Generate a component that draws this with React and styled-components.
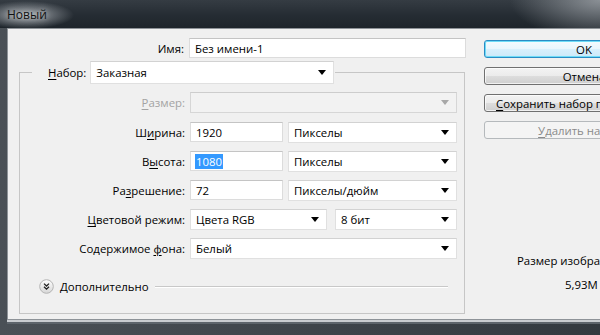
import styled, { createGlobalStyle } from 'styled-components';

const GlobalStyle = createGlobalStyle`
  html, body {
    margin: 0;
    padding: 0;
    background: #1f252b;
  }
  body {
    font-family: "Open Sans", "Liberation Sans", sans-serif;
    font-size: 11.4px;
    color: #000;
  }
`;

function Caret({ disabled }) {
  return (
    <CaretIcon width="8" height="5" viewBox="0 0 8 5">
      <path d="M0 0h8L4 5z" fill={disabled ? '#a8a8a8' : '#000'} />
    </CaretIcon>
  );
}

function Select({ width, disabled, children }) {
  return (
    <SelectBox $width={width} $disabled={disabled}>
      <span>{children}</span>
      <Caret disabled={disabled} />
    </SelectBox>
  );
}

function ExpandIcon() {
  return (
    <svg width="15" height="15" viewBox="0 0 15 15">
      <defs>
        <linearGradient id="exp" x1="0" y1="0" x2="0" y2="1">
          <stop offset="0" stopColor="#ffffff" />
          <stop offset="1" stopColor="#d6d6d6" />
        </linearGradient>
      </defs>
      <circle cx="7.5" cy="7.5" r="6.8" fill="url(#exp)" stroke="#b4b4b4" />
      <path
        d="M5 4.6l2.5 2.4 2.5-2.4M5 7.8l2.5 2.4 2.5-2.4"
        fill="none"
        stroke="#222"
        strokeWidth="1.3"
      />
    </svg>
  );
}

export default function App() {
  return (
    <>
      <GlobalStyle />
      <Window>
        <TitleBar>
          <Title>Новый</Title>
        </TitleBar>
        <Frame>
          <Client>
            <FormPane>
              <NameRow>
                <Label>Имя:</Label>
                <Field $width={277}>Без имени-1</Field>
              </NameRow>
              <Group>
                <Legend>
                  <Label>
                    <u>Н</u>абор:
                  </Label>
                  <Select width={244}>Заказная</Select>
                </Legend>
                <Rows>
                  <Row $extra={1}>
                    <Label $disabled>
                      <u>Р</u>азмер:
                    </Label>
                    <Controls>
                      <Select width={267} disabled />
                    </Controls>
                  </Row>
                  <Row>
                    <Label>
                      Ш<u>и</u>рина:
                    </Label>
                    <Controls>
                      <Field $width={93}>1920</Field>
                      <Select width={169}>Пикселы</Select>
                    </Controls>
                  </Row>
                  <Row>
                    <Label>
                      В<u>ы</u>сота:
                    </Label>
                    <Controls>
                      <Field $width={93}>
                        <Selected>1080</Selected>
                      </Field>
                      <Select width={169}>Пикселы</Select>
                    </Controls>
                  </Row>
                  <Row>
                    <Label>
                      Ра<u>з</u>решение:
                    </Label>
                    <Controls>
                      <Field $width={93}>72</Field>
                      <Select width={169}>Пикселы/дюйм</Select>
                    </Controls>
                  </Row>
                  <Row>
                    <Label>
                      <u>Ц</u>ветовой режим:
                    </Label>
                    <Controls $gap={8}>
                      <Select width={137}>Цвета RGB</Select>
                      <Select width={122}>8 бит</Select>
                    </Controls>
                  </Row>
                  <Row>
                    <Label>
                      Содержимое <u>ф</u>она:
                    </Label>
                    <Controls>
                      <Select width={267}>Белый</Select>
                    </Controls>
                  </Row>
                </Rows>
                <Advanced>
                  <ExpandIcon />
                  <span>Дополнительно</span>
                  <Etched />
                </Advanced>
              </Group>
            </FormPane>
            <SidePane>
              <Button $primary>OK</Button>
              <Button>Отмена</Button>
              <Button>
                <u>С</u>охранить набор параметров...
              </Button>
              <Button $disabled>
                <u>У</u>далить набор...
              </Button>
              <Info>
                <InfoLine $indent={33}>Размер изображения:</InfoLine>
                <InfoLine $indent={81}>5,93M</InfoLine>
              </Info>
            </SidePane>
          </Client>
        </Frame>
      </Window>
    </>
  );
}

const Window = styled.div`
  width: 600px;
  height: 335px;
  overflow: hidden;
  display: flex;
  flex-direction: column;
  background: linear-gradient(180deg, #2f363d 0%, #20262c 100%);
`;

const TitleBar = styled.div`
  height: 28px;
  flex-shrink: 0;
  display: flex;
  align-items: center;
  padding-left: 7px;
  background:
    radial-gradient(ellipse 48px 14px at 26px 15px, rgba(175, 180, 185, 0.95), rgba(175, 180, 185, 0)),
    radial-gradient(ellipse 90px 40px at 600px 0px, rgba(160, 165, 170, 0.8), rgba(160, 165, 170, 0)),
    linear-gradient(180deg, #353c43 0%, #252c33 55%, #1e252b 100%);
`;

const Title = styled.div`
  font-size: 12px;
  color: #111;
  text-shadow: 0 0 6px rgba(220, 222, 225, 0.9);
`;

const Frame = styled.div`
  flex: 1;
  display: flex;
  padding: 0 0 15px 7px;
  background: linear-gradient(90deg, #4a5056 0%, #33393f 100%);
`;

const Client = styled.div`
  height: 292px;
  box-sizing: border-box;
  display: flex;
  flex-shrink: 0;
  background: #f0f0f0;
  border: 1px solid #8e9398;
  border-right: none;
  box-shadow: 0 2px 0 #c9ccd0, 0 4px 0 #5d646b;
`;

const FormPane = styled.div`
  width: 475px;
  flex-shrink: 0;
  padding-top: 9px;
  display: flex;
  flex-direction: column;
`;

const NameRow = styled.div`
  display: flex;
  align-items: center;
  gap: 5px;
  & > :first-child {
    width: 176px;
  }
`;

const Label = styled.div`
  text-align: right;
  white-space: nowrap;
  color: ${(p) => (p.$disabled ? '#a3a3a3' : '#000')};
  u {
    text-underline-offset: 2px;
  }
`;

const Field = styled.div`
  width: ${(p) => p.$width}px;
  height: 20px;
  box-sizing: border-box;
  display: flex;
  align-items: center;
  padding-left: 5px;
  background: #fff;
  border: 1px solid #dcdcdc;
  border-top-color: #c4c4c4;
  flex-shrink: 0;
`;

const Selected = styled.span`
  background: #3399ff;
  color: #fff;
  padding: 0 1px;
  margin-left: -1px;
`;

const SelectBox = styled.div`
  width: ${(p) => p.$width}px;
  height: 21px;
  box-sizing: border-box;
  display: flex;
  align-items: center;
  justify-content: space-between;
  padding: 0 7px 0 5px;
  flex-shrink: 0;
  background: ${(p) => (p.$disabled ? '#f2f2f2' : '#fff')};
  border: 1px solid ${(p) => (p.$disabled ? '#d6d6d6' : '#e0e0e0')};
  border-top-color: ${(p) => (p.$disabled ? '#cdcdcd' : '#d2d2d2')};
`;

const CaretIcon = styled.svg`
  flex-shrink: 0;
`;

const Group = styled.fieldset`
  margin: 3px 0 0 11px;
  padding: 0 0 19px 0;
  width: 446px;
  box-sizing: border-box;
  min-width: 0;
  border: 1px solid #c6c6c6;
`;

const Legend = styled.legend`
  margin-left: 12px;
  padding: 0 1px 0 16px;
  display: flex;
  align-items: center;
  gap: 4px;
  & > div:last-child {
    height: 23px;
  }
`;

const Rows = styled.div`
  margin-top: 8px;
  display: flex;
  flex-direction: column;
  gap: 8px;
`;

const Row = styled.div`
  display: flex;
  align-items: center;
  gap: 5px;
  margin-bottom: ${(p) => p.$extra ?? 0}px;
  & > ${Label} {
    width: 165px;
  }
`;

const Controls = styled.div`
  display: flex;
  gap: ${(p) => p.$gap ?? 5}px;
`;

const Advanced = styled.div`
  margin-top: 20px;
  padding: 0 16px 0 19px;
  display: flex;
  align-items: center;
  gap: 6px;
  height: 15px;
`;

const Etched = styled.div`
  flex: 1;
  border-top: 1px solid #c8c8c8;
  border-bottom: 1px solid #fff;
`;

const SidePane = styled.div`
  width: 200px;
  flex-shrink: 0;
  padding-top: 11px;
  margin-left: 1px;
  display: flex;
  flex-direction: column;
  gap: 9px;
`;

const Button = styled.div`
  height: 18px;
  box-sizing: border-box;
  display: flex;
  align-items: center;
  justify-content: center;
  white-space: nowrap;
  border-radius: 3px;
  border: 1px solid ${(p) => (p.$primary ? '#2a8cc4' : p.$disabled ? '#b5b9bc' : '#707070')};
  color: ${(p) => (p.$disabled ? '#8a8a8a' : '#000')};
  background: ${(p) =>
    p.$disabled
      ? '#f4f4f4'
      : p.$primary
      ? 'linear-gradient(180deg, #f4fbfe 0%, #eaf6fd 50%, #d9f0fc 50%, #cce9f9 100%)'
      : 'linear-gradient(180deg, #f3f3f3 0%, #ebebeb 50%, #dddddd 50%, #cfcfcf 100%)'};
  box-shadow: ${(p) =>
    p.$primary ? 'inset 0 0 0 1px #6fdcf7' : p.$disabled ? 'none' : 'inset 0 0 0 1px rgba(255,255,255,0.7)'};
  u {
    text-underline-offset: 2px;
  }
`;

const Info = styled.div`
  margin-top: 105px;
  display: flex;
  flex-direction: column;
  gap: 8px;
  line-height: 16px;
`;

const InfoLine = styled.div`
  padding-left: ${(p) => p.$indent}px;
  white-space: nowrap;
`;
